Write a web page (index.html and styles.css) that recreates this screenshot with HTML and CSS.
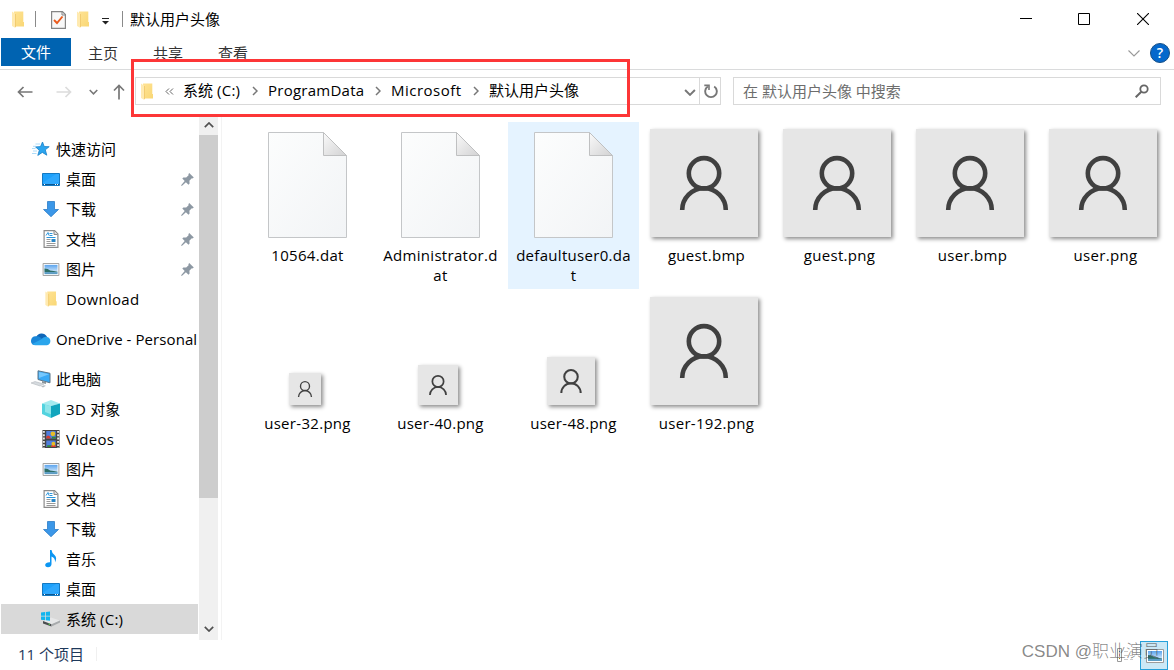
FILE: index.html
```html
<!DOCTYPE html>
<html lang="zh-CN">
<head>
    <meta charset="UTF-8">
    <meta name="viewport" content="width=device-width, initial-scale=1.0">
    <title>默认用户头像</title>
    <link rel="stylesheet" href="styles.css">
</head>
<body>
    <!-- 图标 -->
    <svg class="sprite">
        <linearGradient id="g-page" x1="0" y1="0" x2="1" y2="1">
            <stop offset="0" stop-color="#fcfdfd"/><stop offset="1" stop-color="#f2f4f6"/>
        </linearGradient>
        <linearGradient id="g-fold" x1="0" y1="0" x2="1" y2="1">
            <stop offset="0" stop-color="#fafafa"/><stop offset="1" stop-color="#d2d2d3"/>
        </linearGradient>
        <linearGradient id="g-folder" x1="0" y1="0" x2="1" y2="1">
            <stop offset="0" stop-color="#ffe394"/><stop offset="1" stop-color="#f9d775"/>
        </linearGradient>
        <linearGradient id="g-sky" x1="0" y1="0" x2="0" y2="1">
            <stop offset="0" stop-color="#5ba4ee"/><stop offset="1" stop-color="#f4fbff"/>
        </linearGradient>
        <symbol id="folder" viewBox="0 0 12 17">
            <path d="M2 .5h9.300v10.500h.7v4.500H2z" fill="url(#g-folder)"/>
            <path d="M0 .5l3.500 2.500v14L0 15z" fill="#ffeab0"/>
            <path d="M3.500 3v13" stroke="#efc566" stroke-width=".8" fill="none"/>
        </symbol>
        <symbol id="file" viewBox="0 0 79 106">
            <path d="M.5 .5h55l23 23v82H.5z" fill="url(#g-page)" stroke="#c4c6c8"/>
            <path d="M55.500 .5v23h23z" fill="url(#g-fold)" stroke="#bfc0c1"/>
        </symbol>
        <symbol id="user" viewBox="0 0 108 108">
            <g fill="none" stroke="#404040" stroke-width="4.600">
                <circle cx="54" cy="44.300" r="15.200"/>
                <path d="M32.200 81a21.800 21.800 0 0 1 43.600 0"/>
            </g>
        </symbol>
        <symbol id="star" viewBox="0 0 18 16">
            <path d="M10.500 1l1.700 4.500 5 .2-3.900 3.100 1.500 5.400-4.500-2.800-4.500 3 1.500-5.200-3.800-3.300 5-.300z" fill="#2ba5ef" stroke="#1a80c8" stroke-width=".8"/>
            <path d="M3.500 3h4.500M1 5.300h3M0 7.500h3.500M1 10h4M0 12.500h4.500" stroke="#a5d8f8" fill="none" stroke-width=".9"/>
        </symbol>
        <symbol id="desktop" viewBox="0 0 18 13">
            <path d="M.5 .5h17v12H.5z" fill="#1ea1fb" stroke="#1479c2"/>
            <path d="M1 9.500L14 1h3v10H1z" fill="#3fb0ff" opacity=".5"/>
            <path d="M1 11.500h16" stroke="#0b568f"/>
            <path d="M2 11.500h1M13 11.500h1M15 11.500h1" stroke="#fff"/>
        </symbol>
        <symbol id="down" viewBox="0 0 16 16">
            <path d="M4.500 .5h7v8h4L8 15.700.5 8.500h4z" fill="#3b97e8" stroke="#2b7cc7" stroke-width=".8"/>
        </symbol>
        <symbol id="doc" viewBox="0 0 15 18">
            <path d="M.6 .6h10.500l3.300 3.300v13.500H.6z" fill="#fff" stroke="#8b8b8b" stroke-width="1.200"/>
            <path d="M10.500 1v3.500H14" fill="#ddd" stroke="#8b8b8b"/>
            <path d="M2.500 5.500l2-3 1 3M6 3.500h3M6 5.500h3M3 7.500h9" stroke="#2d96dc" fill="none"/>
            <path d="M3 9.500h4M3 11.500h4M3 13.500h9M3 15.500h9" stroke="#999" fill="none"/>
            <path d="M8 9h4v3H8z" fill="#2a86c5"/>
        </symbol>
        <symbol id="picture" viewBox="0 0 18 14">
            <path d="M.5 .5h17v13H.5z" fill="#fff" stroke="#9b9b9b"/>
            <path d="M2 2h14v10H2z" fill="url(#g-sky)"/>
            <path d="M2 6q4 0 6 2 4 .5 8 1.500V10H2z" fill="#2e6f69"/>
            <path d="M2 9.800h14V12H2z" fill="#5b9cc4"/>
        </symbol>
        <symbol id="pin" viewBox="0 0 13 13">
            <path d="M8.200 0l4.600 4.600-1.400.8-.6-.1-2.400 2.500.2 2.800-1.100 1.100-2.600-2.500L.8 13l-.7-.7 3.600-4.300L1.300 5.500l1.100-1.100 2.800.1 2.400-2.300-.2-1z" fill="#8d98a3"/>
        </symbol>
        <symbol id="cloud" viewBox="0 0 20 14">
            <path d="M5.200 5A6 6 0 0 1 15.800 4.500L17 9 4 8z" fill="#0f66b8"/>
            <path d="M5 4.300a4.600 4.600 0 0 1 4 .9L14 9 3 13A4.500 4.500 0 0 1 5 4.300z" fill="#1a86d8"/>
            <path d="M10 7.500Q13 3.900 16 4.900A4.300 4.300 0 0 1 16 13.300H4.500q-2 0-3.300-1.300z" fill="#2aa5ec"/>
        </symbol>
        <symbol id="pc" viewBox="0 0 20 18">
            <path d="M7 .8l12 2.500v9.500L7 9.500z" fill="#3aa9f5" stroke="#5d7587"/>
            <path d="M8 2l10 2.200L8 8z" fill="#76c8fd"/>
            <path d="M11 11l4 1v2l-4-1z" fill="#8c959b"/>
            <path d="M0 13l4-1.500 9 2.500-4 2z" fill="#d5dade" stroke="#aab1b6" stroke-width=".5"/>
            <path d="M10 16.500l3-1.300 2 .6-3 1.600z" fill="#b5bcc2"/>
        </symbol>
        <symbol id="cube" viewBox="0 0 18 18">
            <path d="M0 3.500L9 0l9 3.500L9 6z" fill="#a5ebef"/>
            <path d="M0 3.500L9 6v12l-9-4z" fill="#52d3df"/>
            <path d="M18 3.500L9 6v12l9-4z" fill="#11a5bd"/>
            <path d="M3 4.500l6 1.700v8L3 12z" fill="#8ee5ea"/>
        </symbol>
        <symbol id="video" viewBox="0 0 18 19">
            <path d="M0 0h18v19H0z" fill="#444"/>
            <path d="M1.500 1v18M16.500 1v18" stroke="#e8e8e8" stroke-width="2" stroke-dasharray="2 1.500"/>
            <path d="M4 1h10v8H4zM4 11h10v7H4z" fill="#4f7ddd"/>
            <path d="M4 7q3-3 5 2H4zM8 18q2-4 6-2v2z" fill="#d53c2f"/>
            <circle cx="11" cy="4" r="2.500" fill="#e7bd26"/>
            <circle cx="11.500" cy="14.500" r="2" fill="#e7bd26"/>
            <path d="M10 7h4v2h-4zM5 16h4v2H5z" fill="#328a38"/>
        </symbol>
        <symbol id="music" viewBox="0 0 12 18">
            <path d="M5 0h1.500q.3 3 3 5 3 2.700.5 7.500.5-4.500-3.500-6v7.700Q6.200 17 3 17.200q-3 0-2.800-2.400.4-2.700 4.800-2.600z" fill="#0c96f2"/>
        </symbol>
        <symbol id="drive" viewBox="0 0 20 15">
            <path d="M2 9.500L10 6l9 3-8.500 4z" fill="#e6e7e8"/>
            <path d="M2 9.500l8.500 3.200V15L2 12z" fill="#4a4d4f"/>
            <path d="M10.500 12.700L19 9v2l-8.500 4z" fill="#a7aaac"/>
            <path d="M7.500 12.500l1.500.5" stroke="#58e048"/>
            <path d="M0 1l4-.5v3.700H0zM4.800.4L9 0v4.200H4.800zM0 5h4v3.700L0 8.300zM4.800 5H9v4.200l-4.200-.5z" fill="#12b5ee"/>
        </symbol>
        <symbol id="chevron-down" viewBox="0 0 10 6">
            <path d="M.8 .8L5 5 9.200 .8" fill="none" stroke="currentColor" stroke-width="1.700"/>
        </symbol>
        <symbol id="chevron-right" viewBox="0 0 6 10">
            <path d="M1 1l4 4-4 4" fill="none" stroke="#777" stroke-width="1.500"/>
        </symbol>
        <symbol id="arrow" viewBox="0 0 15 12">
            <path d="M6 1L1 6l5 5M1 6h14" fill="none" stroke="currentColor" stroke-width="1.700"/>
        </symbol>
    </svg>

    <div class="window">
        <header class="titlebar">
            <svg class="icon-folder"><use href="#folder"/></svg>
            <span class="sep"></span>
            <svg class="icon-check" viewBox="0 0 15 18">
                <path d="M.6 .6h10.800l3 3v13.800H.6z" fill="#f8f8f8" stroke="#858585" stroke-width="1.200"/>
                <path d="M11 .8v3.200h3.200" fill="none" stroke="#858585"/>
                <path d="M3 9l3 3 5.500-6.500" fill="none" stroke="#ea5a1c" stroke-width="1.900"/>
            </svg>
            <svg class="icon-folder"><use href="#folder"/></svg>
            <svg class="icon-more" viewBox="0 0 7 7"><path d="M0 .5h7" stroke="#222"/><path d="M0 3h7L3.500 6.500z" fill="#222"/></svg>
            <span class="sep"></span>
            <h1 class="title">默认用户头像</h1>
            <div class="window-buttons">
                <svg viewBox="0 0 12 12"><path d="M0 5.500h12" stroke="#000"/></svg>
                <svg viewBox="0 0 12 12"><path d="M.5 .5h11v11H.5z" fill="none" stroke="#000"/></svg>
                <svg class="close" viewBox="0 0 12 12"><path d="M0 0l12 12M12 0L0 12" stroke="#000" stroke-width="1.100"/></svg>
            </div>
        </header>

        <nav class="tabs">
            <span class="tab tab-file">文件</span>
            <span class="tab">主页</span>
            <span class="tab">共享</span>
            <span class="tab">查看</span>
            <div class="tabs-right">
                <svg class="ribbon-toggle" viewBox="0 0 12 7"><path d="M.5 .5L6 6 11.500 .5" fill="none" stroke="#999" stroke-width="1.100"/></svg>
                <span class="help">?</span>
            </div>
        </nav>

        <div class="toolbar">
            <div class="history">
                <svg class="back"><use href="#arrow"/></svg>
                <svg class="forward"><use href="#arrow"/></svg>
                <svg class="recent"><use href="#chevron-down"/></svg>
                <svg class="up"><use href="#arrow"/></svg>
            </div>
            <div class="address">
                <svg class="icon-folder"><use href="#folder"/></svg>
                <svg class="crumb-back" viewBox="0 0 9 7"><path d="M4 .5l-3 3 3 3M8 .5l-3 3 3 3" fill="none" stroke="#666"/></svg>
                <span class="crumb c1">系统 <span class="latin">(C:)</span></span>
                <svg class="crumb-sep"><use href="#chevron-right"/></svg>
                <span class="crumb c2">ProgramData</span>
                <svg class="crumb-sep"><use href="#chevron-right"/></svg>
                <span class="crumb c3">Microsoft</span>
                <svg class="crumb-sep"><use href="#chevron-right"/></svg>
                <span class="crumb">默认用户头像</span>
                <div class="address-right">
                    <svg class="address-drop"><use href="#chevron-down"/></svg>
                    <span class="refresh">
                        <svg viewBox="0 0 14 15"><path d="M10.200 2.500A5.800 5.800 0 1 1 3.800 2.500" fill="none" stroke="#777" stroke-width="1.900"/><path d="M.3 1.400h4.700v4.600" fill="none" stroke="#777" stroke-width="1.600"/></svg>
                    </span>
                </div>
            </div>
            <div class="search">
                <span>在 默认用户头像 中搜索</span>
                <svg viewBox="0 0 14 14"><circle cx="9" cy="5" r="3.700" fill="none" stroke="#666" stroke-width="1.800"/><path d="M6.300 7.700L.7 13.300" stroke="#666" stroke-width="2"/></svg>
            </div>
        </div>

        <div class="main">
            <aside class="sidebar">
                <div class="node root"><svg class="small"><use href="#star"/></svg><span>快速访问</span></div>
                <div class="node"><svg class="flat"><use href="#desktop"/></svg><span>桌面</span><svg class="pin"><use href="#pin"/></svg></div>
                <div class="node"><svg class="small"><use href="#down"/></svg><span>下载</span><svg class="pin"><use href="#pin"/></svg></div>
                <div class="node"><svg><use href="#doc"/></svg><span>文档</span><svg class="pin"><use href="#pin"/></svg></div>
                <div class="node"><svg class="flat"><use href="#picture"/></svg><span>图片</span><svg class="pin"><use href="#pin"/></svg></div>
                <div class="node"><svg class="small"><use href="#folder"/></svg><span class="latin">Download</span></div>
                <div class="node root group"><svg><use href="#cloud"/></svg><span class="onedrive">OneDrive - Personal</span></div>
                <div class="node root group"><svg><use href="#pc"/></svg><span>此电脑</span></div>
                <div class="node"><svg><use href="#cube"/></svg><span><span class="latin">3D </span>对象</span></div>
                <div class="node"><svg><use href="#video"/></svg><span class="latin">Videos</span></div>
                <div class="node"><svg class="flat"><use href="#picture"/></svg><span>图片</span></div>
                <div class="node"><svg><use href="#doc"/></svg><span>文档</span></div>
                <div class="node"><svg class="small"><use href="#down"/></svg><span>下载</span></div>
                <div class="node"><svg><use href="#music"/></svg><span>音乐</span></div>
                <div class="node"><svg class="flat"><use href="#desktop"/></svg><span>桌面</span></div>
                <div class="node active"><svg><use href="#drive"/></svg><span>系统 <span class="latin">(C:)</span></span></div>
            </aside>
            <div class="scrollbar">
                <svg class="scroll-up"><use href="#chevron-down"/></svg>
                <div class="thumb"></div>
                <svg class="scroll-down"><use href="#chevron-down"/></svg>
            </div>
            <section class="files">
                <div class="file"><div class="preview"><svg class="dat"><use href="#file"/></svg></div><p>10564.dat</p></div>
                <div class="file"><div class="preview"><svg class="dat"><use href="#file"/></svg></div><p>Administrator.d<br>at</p></div>
                <div class="file hover"><div class="preview"><svg class="dat"><use href="#file"/></svg></div><p>defaultuser0.da<br>t</p></div>
                <div class="file"><div class="preview"><svg class="avatar"><use href="#user"/></svg></div><p>guest.bmp</p></div>
                <div class="file"><div class="preview"><svg class="avatar"><use href="#user"/></svg></div><p>guest.png</p></div>
                <div class="file"><div class="preview"><svg class="avatar"><use href="#user"/></svg></div><p>user.bmp</p></div>
                <div class="file"><div class="preview"><svg class="avatar"><use href="#user"/></svg></div><p>user.png</p></div>
                <div class="file"><div class="preview"><svg class="avatar s32"><use href="#user"/></svg></div><p>user-32.png</p></div>
                <div class="file"><div class="preview"><svg class="avatar s40"><use href="#user"/></svg></div><p>user-40.png</p></div>
                <div class="file"><div class="preview"><svg class="avatar s48"><use href="#user"/></svg></div><p>user-48.png</p></div>
                <div class="file"><div class="preview"><svg class="avatar"><use href="#user"/></svg></div><p>user-192.png</p></div>
            </section>
        </div>

        <footer class="status">
            <span class="count">11 个项目</span>
            <div class="views">
                <svg class="view-list" viewBox="0 0 17 14">
                    <path d="M.5 .5h4v13h-4z" fill="#fff" stroke="#999"/>
                    <path d="M2 3.500h1" stroke="#2a86c5"/><path d="M2 7h1" stroke="#c33"/><path d="M2 10.500h1" stroke="#a80"/>
                    <path d="M7 3.500h4M7 7.500h4M7 11.500h4M13 3.500h3M13 7.500h3M13 11.500h3" stroke="#ccc"/>
                </svg>
                <span class="view-large"><svg><use href="#picture"/></svg></span>
            </div>
        </footer>

        <div class="highlight"></div>
        <div class="watermark">CSDN @职业演员</div>
    </div>
</body>
</html>
```

FILE: styles.css
```css
* {
    box-sizing: border-box;
}
body {
    margin: 0;
    background: #fff;
    color: #000;
    font-family: "Open Sans", "Noto Sans CJK SC", sans-serif;
    font-size: 15px;
    line-height: 20px;
}
svg {
    display: block;
    flex: none;
}
.sprite {
    position: absolute;
    width: 0;
    height: 0;
}
.latin {
    letter-spacing: 0.3px;
}
.window {
    position: relative;
    width: 1174px;
    height: 670px;
    overflow: hidden;
    display: flex;
    flex-direction: column;
}
.icon-folder {
    width: 12px;
    height: 17px;
}

/* 标题栏 */
.titlebar {
    height: 38px;
    padding-left: 12px;
    display: flex;
    align-items: center;
}
.sep {
    width: 1px;
    height: 16px;
    margin-left: 11px;
    background: #8a8a8a;
}
.icon-check {
    width: 15px;
    height: 18px;
    margin: 2px 11px 0 15px;
}
.icon-more {
    width: 7px;
    height: 7px;
    margin: 4px 2px 0 13px;
}
.title {
    margin: 0 0 0 7px;
    font-size: 15px;
    font-weight: normal;
}
.window-buttons {
    margin-left: auto;
    margin-right: 25px;
    display: flex;
    gap: 46px;
}
.window-buttons svg {
    width: 12px;
    height: 12px;
}
.window-buttons .close {
    margin-left: 1px;
}

/* 选项卡 */
.tabs {
    height: 32px;
    padding-left: 1px;
    border-bottom: 1px solid #dadbdc;
    display: flex;
}
.tab {
    width: 65px;
    padding: 5px 1px 0 0;
    text-align: center;
    color: #333;
}
.tab-file {
    width: 70px;
    height: 28px;
    padding: 4px 0 0;
    background: #0063b1;
    color: #fff;
}
.tabs-right {
    margin: 0 4px 1px auto;
    display: flex;
    align-items: center;
    gap: 10px;
}
.ribbon-toggle {
    width: 12px;
    height: 7px;
}
.help {
    width: 20px;
    height: 20px;
    border: 1px solid #164f86;
    border-radius: 50%;
    background: #0568cc;
    color: #fff;
    font-size: 14px;
    font-weight: 600;
    line-height: 18px;
    text-align: center;
}

/* 地址栏 */
.toolbar {
    height: 46px;
    padding: 7px 13px 0 17px;
    display: flex;
}
.history {
    width: 118px;
    height: 28px;
    display: flex;
    align-items: center;
    color: #777;
}
.history svg {
    width: 16px;
    height: 12px;
    margin-top: 2px;
}
.history .forward {
    margin-left: 23px;
    color: #dcdcdc;
    transform: scaleX(-1);
}
.history .recent {
    width: 9px;
    height: 6px;
    margin-left: 17px;
}
.history .up {
    margin-left: 13px;
    transform: rotate(90deg);
}
.address,
.search {
    height: 28px;
    border: 1px solid #d9d9d9;
    display: flex;
    align-items: center;
}
.address {
    width: 586px;
    padding-left: 5px;
}
.crumb-back {
    width: 9px;
    height: 7px;
    margin: 0 9px 0 12px;
}
.crumb {
    padding-bottom: 2px;
    white-space: nowrap;
}
.c1 {
    width: 58px;
}
.c2 {
    width: 96px;
    letter-spacing: 0.25px;
}
.c3 {
    width: 71px;
    letter-spacing: 0.5px;
}
.crumb-sep {
    width: 6px;
    height: 10px;
    margin: 0 10px 1px 11px;
}
.address-right {
    height: 26px;
    margin-left: auto;
    display: flex;
    align-items: center;
}
.address-drop {
    width: 12px;
    height: 7px;
    margin: 3px 3px 0 0;
    color: #777;
}
.refresh {
    width: 21px;
    height: 26px;
    padding: 6px 0 0 4px;
    border-left: 1px solid #d9d9d9;
}
.refresh svg {
    width: 14px;
    height: 15px;
}
.search {
    width: 428px;
    margin-left: 12px;
    padding: 0 11px 0 9px;
    justify-content: space-between;
    color: #6d6d6d;
}
.search svg {
    width: 14px;
    height: 14px;
}

/* 左侧导航 */
.main {
    height: 524px;
    display: flex;
}
.sidebar {
    width: 198px;
    padding: 18px 0 0 1px;
    overflow: hidden;
}
.node {
    height: 30px;
    padding-left: 40px;
    display: flex;
    align-items: center;
    white-space: nowrap;
}
.node svg {
    width: 20px;
    height: 18px;
    margin-right: 5px;
}
.node .small {
    height: 16px;
}
.node .flat {
    height: 13px;
}
.root {
    padding-left: 30px;
}
.group {
    margin-top: 10px;
}
.onedrive {
    letter-spacing: 0.08px;
}
.node .pin {
    width: 13px;
    height: 13px;
    margin: 0 4px 0 auto;
}
.active {
    background: #d9d9d9;
}
.scrollbar {
    width: 19px;
    margin-left: 1px;
    background: #f0f0f0;
    color: #505050;
    display: flex;
    flex-direction: column;
    align-items: center;
}
.scrollbar svg {
    width: 10px;
    height: 6px;
}
.scroll-up {
    margin: 6px 0 7px;
    transform: rotate(180deg);
}
.thumb {
    width: 19px;
    height: 363px;
    background: #cdcdcd;
}
.scroll-down {
    margin: auto 0 8px;
}

/* 文件列表 */
.files {
    flex: 1;
    margin-left: 3px;
    padding: 6px 0 0 20px;
    border-left: 1px solid #f3f3f3;
    display: grid;
    grid-template-columns: repeat(7, 131px);
    grid-auto-rows: 167px;
    gap: 1px 2px;
    align-content: start;
}
.file {
    text-align: center;
}
.hover {
    background: #e5f3ff;
}
.preview {
    height: 116px;
    display: flex;
    align-items: flex-end;
    justify-content: center;
}
.dat {
    width: 79px;
    height: 106px;
}
.avatar {
    width: 108px;
    height: 108px;
    margin: 0 5px 1px 0;
    background: #e6e6e6;
    box-shadow: 2px 2px 4px rgba(0, 0, 0, 0.45);
}
.s32 {
    width: 32px;
    height: 32px;
}
.s40 {
    width: 40px;
    height: 40px;
}
.s48 {
    width: 48px;
    height: 48px;
}
.file p {
    margin: 7px 0 0;
    letter-spacing: 0.3px;
}

/* 状态栏 */
.status {
    height: 30px;
    padding: 0 6px 0 18px;
    display: flex;
    justify-content: space-between;
    align-items: center;
    color: #1e395b;
}
.count {
    margin-bottom: 2px;
    padding-right: 12px;
    border-right: 1px solid #f0f0f0;
    line-height: 14px;
}
.views {
    display: flex;
    align-items: center;
    gap: 6px;
}
.view-list {
    width: 17px;
    height: 14px;
}
.view-large {
    width: 28px;
    height: 29px;
    padding: 7px 0 0 5px;
    border: 1px solid #26a0da;
    background: #cbe8f6;
}
.view-large svg {
    width: 18px;
    height: 14px;
}

.highlight {
    position: absolute;
    left: 131px;
    top: 59px;
    width: 499px;
    height: 58px;
    border: 3px solid #fd3637;
}
.watermark {
    position: absolute;
    right: 14px;
    bottom: 7px;
    color: rgba(70, 70, 70, 0.65);
    font-family: "Liberation Sans", "Noto Sans CJK SC", sans-serif;
    font-size: 17px;
    font-weight: 300;
    line-height: 22px;
}
```
